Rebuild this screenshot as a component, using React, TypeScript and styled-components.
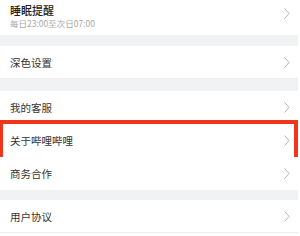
import styled, { createGlobalStyle } from "styled-components";

const GlobalStyle = createGlobalStyle`
  html, body {
    margin: 0;
    padding: 0;
    background: #ffffff;
    overflow: hidden;
  }
  body {
    font-family: "Noto Sans CJK SC", "Noto Sans", sans-serif;
  }
`;

const Page = styled.div`
  width: 298px;
  display: flex;
  flex-direction: column;
  margin-top: -8px;
`;

const Row = styled.div<{ tall?: boolean; divider?: boolean }>`
  position: relative;
  height: ${(p) => (p.tall ? "43px" : "33px")};
  display: flex;
  align-items: center;
  justify-content: space-between;
  padding: 0 8px 0 10px;
  box-sizing: border-box;
  background: #ffffff;
  border-bottom: ${(p) => (p.divider ? "1px solid #ededed" : "none")};
`;

const Texts = styled.div`
  display: flex;
  flex-direction: column;
  gap: 1px;
  margin-top: 5px;
`;

const Label = styled.span<{ bold?: boolean }>`
  font-size: ${(p) => (p.bold ? "11px" : "10.5px")};
  line-height: 13px;
  color: ${(p) => (p.bold ? "#222" : "#333")};
  font-weight: ${(p) => (p.bold ? 500 : 400)};
`;

const Sub = styled.span`
  font-size: 8.5px;
  line-height: 11px;
  color: #a8a8a8;
`;

const Gap = styled.div<{ h?: number }>`
  height: ${(p) => p.h ?? 11}px;
  background: #f1f2f4;
`;

const Highlight = styled.div`
  position: absolute;
  top: -4px;
  bottom: -4px;
  left: -1px;
  right: 0;
  border: 4px solid #f0351b;
  pointer-events: none;
`;

const Chevron = () => (
  <svg width="6" height="11" viewBox="0 0 6 11" fill="none">
    <path d="M0.8 0.8 L5.2 5.5 L0.8 10.2" stroke="#b3b3b3" strokeWidth="1" strokeLinecap="round" strokeLinejoin="round" />
  </svg>
);

export default function App() {
  return (
    <>
      <GlobalStyle />
      <Page>
        <Row tall>
          <Texts>
            <Label bold>睡眠提醒</Label>
            <Sub>每日23:00至次日07:00</Sub>
          </Texts>
          <Chevron />
        </Row>
        <Gap />
        <Row divider>
          <Label>深色设置</Label>
          <Chevron />
        </Row>
        <Gap h={12} />
        <Row>
          <Label>我的客服</Label>
          <Chevron />
        </Row>
        <Row>
          <Label>关于哔哩哔哩</Label>
          <Chevron />
          <Highlight />
        </Row>
        <Row>
          <Label>商务合作</Label>
          <Chevron />
        </Row>
        <Gap h={10} />
        <Row divider>
          <Label>用户协议</Label>
          <Chevron />
        </Row>
      </Page>
    </>
  );
}
